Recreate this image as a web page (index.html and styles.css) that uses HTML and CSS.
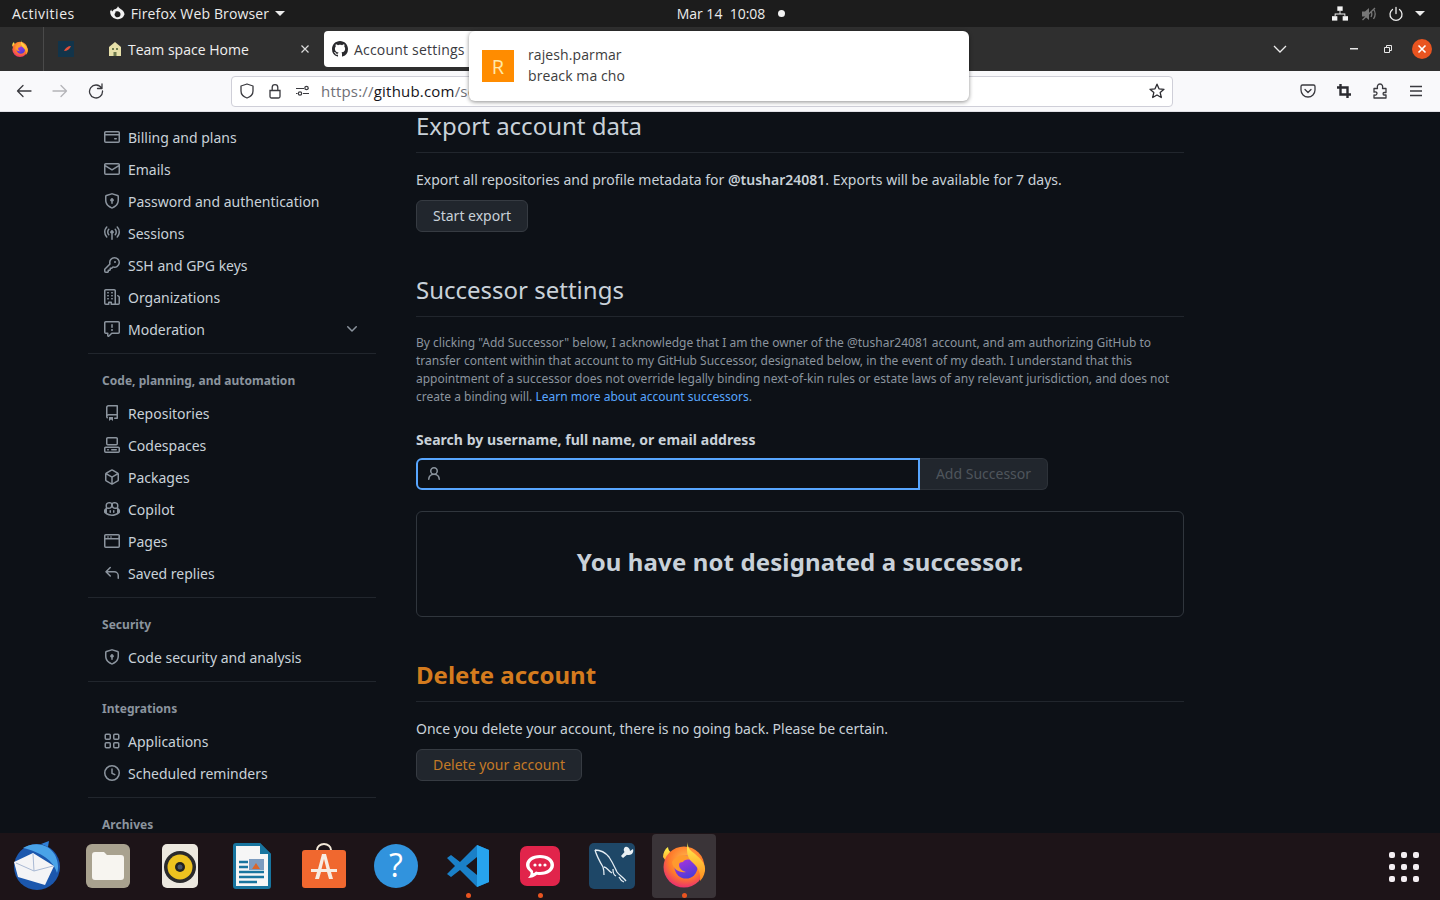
FILE: index.html
```html
<!DOCTYPE html>
<html lang="en">
<head>
  <meta charset="UTF-8">
  <title>Account settings</title>
  <link rel="stylesheet" href="styles.css">
</head>
<body>
  <svg class="sprite" xmlns="http://www.w3.org/2000/svg">
    <defs>
      <radialGradient id="foxBody" cx="0.55" cy="0.35" r="0.75">
        <stop offset="0" stop-color="#ffbd4f"/>
        <stop offset="0.55" stop-color="#ff7a2a"/>
        <stop offset="1" stop-color="#e31587"/>
      </radialGradient>
      <linearGradient id="foxFlame" x1="0.5" y1="0" x2="0.5" y2="1">
        <stop offset="0" stop-color="#fff44f"/>
        <stop offset="1" stop-color="#ff8a1f"/>
      </linearGradient>
      <linearGradient id="foxCore" x1="0.2" y1="0" x2="0.6" y2="1">
        <stop offset="0" stop-color="#b833e1"/>
        <stop offset="1" stop-color="#4b3bd6"/>
      </linearGradient>
    </defs>
    <symbol id="i-card" viewBox="0 0 16 16"><path d="M10.75 9a.75.75 0 0 0 0 1.5h1.5a.75.75 0 0 0 0-1.5h-1.5Z"/><path d="M0 3.75C0 2.784.784 2 1.75 2h12.5c.966 0 1.75.784 1.75 1.75v8.5A1.75 1.75 0 0 1 14.25 14H1.75A1.75 1.75 0 0 1 0 12.25ZM14.5 6.5h-13v5.75c0 .138.112.25.25.25h12.5a.25.25 0 0 0 .25-.25Zm0-2.75a.25.25 0 0 0-.25-.25H1.75a.25.25 0 0 0-.25.25V5h13Z"/></symbol>
    <symbol id="i-mail" viewBox="0 0 16 16"><path d="M1.75 2h12.5c.966 0 1.75.784 1.75 1.75v8.5A1.75 1.75 0 0 1 14.25 14H1.75A1.75 1.75 0 0 1 0 12.25v-8.5C0 2.784.784 2 1.75 2ZM1.5 12.251c0 .138.112.25.25.25h12.5a.25.25 0 0 0 .25-.25V5.809L8.38 9.397a.75.75 0 0 1-.76 0L1.5 5.809v6.442Zm13-8.181v-.32a.25.25 0 0 0-.25-.25H1.75a.25.25 0 0 0-.25.25v.32L8 7.88Z"/></symbol>
    <symbol id="i-shield" viewBox="0 0 16 16"><path d="M7.467.133a1.748 1.748 0 0 1 1.066 0l5.25 1.68A1.75 1.75 0 0 1 15 3.48V7c0 1.566-.32 3.182-1.303 4.682-.983 1.498-2.585 2.813-5.032 3.855a1.697 1.697 0 0 1-1.33 0c-2.447-1.042-4.049-2.357-5.032-3.855C1.32 10.182 1 8.566 1 7V3.48a1.75 1.75 0 0 1 1.217-1.667Zm.61 1.429a.25.25 0 0 0-.153 0l-5.25 1.68a.25.25 0 0 0-.174.238V7c0 1.358.275 2.666 1.057 3.86.784 1.194 2.121 2.34 4.366 3.297a.196.196 0 0 0 .154 0c2.245-.956 3.582-2.104 4.366-3.298C13.225 9.666 13.5 8.36 13.5 7V3.48a.251.251 0 0 0-.174-.237l-5.25-1.68ZM8.75 8.582v1.668a.75.75 0 0 1-1.5 0V8.582a1.75 1.75 0 1 1 1.5 0Z"/></symbol>
    <symbol id="i-broadcast" viewBox="0 0 16 16"><path d="M8.75 8.582v5.668a.75.75 0 0 1-1.5 0V8.582a1.75 1.75 0 1 1 1.5 0Zm3.983-7.125a.75.75 0 0 1 1.06.026A7.976 7.976 0 0 1 16 7c0 2.139-.84 4.083-2.207 5.517a.75.75 0 1 1-1.086-1.034A6.474 6.474 0 0 0 14.5 7a6.474 6.474 0 0 0-1.793-4.483.75.75 0 0 1 .026-1.06Zm-9.466 0a.75.75 0 0 1 .026 1.06A6.474 6.474 0 0 0 1.5 7a6.47 6.47 0 0 0 1.793 4.483.75.75 0 0 1-1.086 1.034A7.973 7.973 0 0 1 0 7c0-2.139.84-4.083 2.207-5.517a.75.75 0 0 1 1.06-.026Zm8.556 2.321A4.988 4.988 0 0 1 13 7a4.988 4.988 0 0 1-1.177 3.222.75.75 0 1 1-1.146-.967A3.487 3.487 0 0 0 11.5 7c0-.86-.309-1.645-.823-2.255a.75.75 0 0 1 1.146-.967Zm-6.492.958A3.487 3.487 0 0 0 4.5 7a3.49 3.49 0 0 0 .823 2.255.75.75 0 0 1-1.146.967A4.981 4.981 0 0 1 3 7c0-1.23.443-2.359 1.177-3.222a.75.75 0 1 1 1.146.967Z"/></symbol>
    <symbol id="i-key" viewBox="0 0 16 16"><path d="M10.5 0a5.499 5.499 0 1 1-1.288 10.848l-.932.932a.749.749 0 0 1-.53.22H7v.75a.749.749 0 0 1-.22.53l-.5.5a.749.749 0 0 1-.53.22H5v.75a.749.749 0 0 1-.22.53l-.5.5a.749.749 0 0 1-.53.22h-2A1.75 1.75 0 0 1 0 14.25v-2c0-.199.079-.389.22-.53l4.932-4.932A5.5 5.5 0 0 1 10.5 0Zm-4 5.5c-.001.431.069.86.205 1.269a.75.75 0 0 1-.181.768L1.5 12.56v1.69c0 .138.112.25.25.25h1.69l.06-.06v-1.19a.75.75 0 0 1 .75-.75h1.19l.06-.06v-1.19a.75.75 0 0 1 .75-.75h1.19l1.023-1.025a.75.75 0 0 1 .768-.18A4 4 0 1 0 6.5 5.5ZM11 6a1 1 0 1 1 0-2 1 1 0 0 1 0 2Z"/></symbol>
    <symbol id="i-org" viewBox="0 0 16 16"><path d="M1.75 16A1.75 1.75 0 0 1 0 14.25V1.75C0 .784.784 0 1.75 0h8.5C11.216 0 12 .784 12 1.75v12.5c0 .085-.006.168-.018.25h2.268a.25.25 0 0 0 .25-.25V8.285a.25.25 0 0 0-.111-.208l-1.055-.703a.749.749 0 1 1 .832-1.248l1.055.703c.487.325.779.871.779 1.456v5.965A1.75 1.75 0 0 1 14.25 16h-3.5a.766.766 0 0 1-.197-.026c-.099.017-.2.026-.303.026h-3a.75.75 0 0 1-.75-.75V14h-1v1.25a.75.75 0 0 1-.75.75Zm-.25-1.75c0 .138.112.25.25.25H4v-1.25a.75.75 0 0 1 .75-.75h2.5a.75.75 0 0 1 .75.75v1.25h2.25a.25.25 0 0 0 .25-.25V1.75a.25.25 0 0 0-.25-.25h-8.5a.25.25 0 0 0-.25.25ZM3.75 6h.5a.75.75 0 0 1 0 1.5h-.5a.75.75 0 0 1 0-1.5ZM3 3.75A.75.75 0 0 1 3.75 3h.5a.75.75 0 0 1 0 1.5h-.5A.75.75 0 0 1 3 3.75Zm4 3A.75.75 0 0 1 7.75 6h.5a.75.75 0 0 1 0 1.5h-.5A.75.75 0 0 1 7 6.75ZM7.75 3h.5a.75.75 0 0 1 0 1.5h-.5a.75.75 0 0 1 0-1.5ZM3 9.750A.75.75 0 0 1 3.75 9h.5a.75.75 0 0 1 0 1.5h-.5A.75.75 0 0 1 3 9.750ZM7.75 9h.5a.75.75 0 0 1 0 1.5h-.5a.75.75 0 0 1 0-1.5Z"/></symbol>
    <symbol id="i-report" viewBox="0 0 16 16"><path d="M0 1.75C0 .784.784 0 1.75 0h12.5C15.216 0 16 .784 16 1.75v9.5A1.75 1.75 0 0 1 14.25 13H8.06l-2.573 2.573A1.458 1.458 0 0 1 3 14.543V13H1.75A1.75 1.75 0 0 1 0 11.25Zm1.75-.25a.25.25 0 0 0-.25.25v9.5c0 .138.112.25.25.25h2a.75.75 0 0 1 .75.75v2.19l2.72-2.72a.749.749 0 0 1 .53-.22h6.5a.25.25 0 0 0 .25-.25v-9.5a.25.25 0 0 0-.25-.25Zm7 2.25v2.5a.75.75 0 0 1-1.5 0v-2.5a.75.75 0 0 1 1.5 0ZM9 9a1 1 0 1 1-2 0 1 1 0 0 1 2 0Z"/></symbol>
    <symbol id="i-repo" viewBox="0 0 16 16"><path d="M2 2.5A2.5 2.5 0 0 1 4.5 0h8.75a.75.75 0 0 1 .75.75v12.5a.75.75 0 0 1-.75.75h-2.5a.75.75 0 0 1 0-1.5h1.75v-2h-8a1 1 0 0 0-.714 1.7.75.75 0 1 1-1.072 1.05A2.495 2.495 0 0 1 2 11.5Zm10.5-1h-8a1 1 0 0 0-1 1v6.708A2.486 2.486 0 0 1 4.5 9h8ZM5 12.25a.25.25 0 0 1 .25-.25h3.5a.25.25 0 0 1 .25.25v3.25a.25.25 0 0 1-.4.2l-1.45-1.087a.249.249 0 0 0-.3 0L5.4 15.7a.25.25 0 0 1-.4-.2Z"/></symbol>
    <symbol id="i-codespaces" viewBox="0 0 16 16"><path d="M0 11.25c0-.966.784-1.75 1.75-1.75h12.5c.966 0 1.75.784 1.75 1.75v3A1.75 1.75 0 0 1 14.25 16H1.75A1.75 1.75 0 0 1 0 14.25Zm2-9.5C2 .784 2.784 0 3.75 0h8.5C13.216 0 14 .784 14 1.75v5a1.75 1.75 0 0 1-1.75 1.75h-8.5A1.75 1.75 0 0 1 2 6.75Zm1.75-.25a.25.25 0 0 0-.25.25v5c0 .138.112.25.25.25h8.5a.25.25 0 0 0 .25-.25v-5a.25.25 0 0 0-.25-.25Zm-2 9.5a.25.25 0 0 0-.25.25v3c0 .138.112.25.25.25h12.5a.25.25 0 0 0 .25-.25v-3a.25.25 0 0 0-.25-.25Z"/><path d="M7 12.75a.75.75 0 0 1 .75-.75h4.5a.75.75 0 0 1 0 1.5h-4.5a.75.75 0 0 1-.75-.75Zm-4 0a.75.75 0 0 1 .75-.75h.5a.75.75 0 0 1 0 1.5h-.5a.75.75 0 0 1-.75-.75Z"/></symbol>
    <symbol id="i-package" viewBox="0 0 16 16"><path d="m8.878.392 5.25 3.045c.54.314.872.89.872 1.514v6.098a1.75 1.75 0 0 1-.872 1.514l-5.25 3.045a1.75 1.75 0 0 1-1.756 0l-5.25-3.045A1.75 1.75 0 0 1 1 11.049V4.951c0-.624.332-1.201.872-1.514L7.122.392a1.75 1.75 0 0 1 1.756 0ZM7.875 1.69l-4.63 2.685L8 7.133l4.755-2.758-4.63-2.685a.248.248 0 0 0-.25 0ZM2.5 5.677v5.372c0 .09.047.171.125.216l4.625 2.683V8.432Zm6.25 8.271 4.625-2.683a.25.25 0 0 0 .125-.216V5.677L8.75 8.432Z"/></symbol>
    <symbol id="i-copilot" viewBox="0 0 16 16"><path d="M7.998 15.035c-4.562 0-7.873-2.914-7.998-3.749V9.338c.085-.628.677-1.686 1.588-2.065.013-.07.024-.143.036-.218.029-.183.06-.384.126-.612-.201-.508-.254-1.084-.254-1.656 0-.87.128-1.769.693-2.484.579-.733 1.494-1.124 2.724-1.261 1.206-.134 2.262.034 2.944.765.05.053.096.108.139.165.044-.057.094-.112.143-.165.682-.731 1.738-.899 2.944-.765 1.23.137 2.145.528 2.724 1.261.566.715.693 1.614.693 2.484 0 .572-.053 1.148-.254 1.656.066.228.098.429.126.612.012.076.024.148.037.218.924.385 1.522 1.471 1.591 2.095v1.872c0 .766-3.351 3.795-8.002 3.795Zm0-1.485c2.28 0 4.584-1.11 5.002-1.433V7.862l-.023-.116c-.49.21-1.075.291-1.727.291-1.146 0-2.059-.327-2.71-.991A3.222 3.222 0 0 1 8 6.303a3.24 3.24 0 0 1-.544.743c-.65.664-1.563.991-2.71.991-.652 0-1.236-.081-1.727-.291l-.023.116v4.255c.419.323 2.722 1.433 5.002 1.433ZM6.762 2.83c-.193-.206-.637-.413-1.682-.297-1.019.113-1.479.404-1.713.7-.247.312-.369.789-.369 1.554 0 .793.129 1.171.308 1.371.162.181.519.379 1.442.379.853 0 1.339-.235 1.638-.54.315-.322.527-.827.617-1.553.117-.935-.037-1.395-.241-1.614Zm4.155-.297c-1.044-.116-1.488.091-1.681.297-.204.219-.359.679-.242 1.614.091.726.303 1.231.618 1.553.299.305.784.54 1.638.54.922 0 1.28-.198 1.442-.379.179-.2.308-.578.308-1.371 0-.765-.123-1.242-.37-1.554-.233-.296-.693-.587-1.713-.7Z"/><path d="M6.25 9.037a.75.75 0 0 1 .75.75v1.501a.75.75 0 0 1-1.5 0V9.787a.75.75 0 0 1 .75-.75Zm4.25.75v1.501a.75.75 0 0 1-1.5 0V9.787a.75.75 0 0 1 1.5 0Z"/></symbol>
    <symbol id="i-browser" viewBox="0 0 16 16"><path d="M0 2.75C0 1.784.784 1 1.75 1h12.5c.966 0 1.75.784 1.75 1.75v10.5A1.75 1.75 0 0 1 14.25 15H1.75A1.75 1.75 0 0 1 0 13.25ZM14.5 6.5h-13v6.75c0 .138.112.25.25.25h12.5a.25.25 0 0 0 .25-.25Zm0-3.75a.25.25 0 0 0-.25-.25H1.75a.25.25 0 0 0-.25.25V5h2V3h1v2h2V3h1v2h6.75Z"/></symbol>
    <symbol id="i-reply" viewBox="0 0 16 16"><path d="M6.78 1.97a.75.75 0 0 1 0 1.06L3.81 6h6.44A4.75 4.75 0 0 1 15 10.75v2.5a.75.75 0 0 1-1.5 0v-2.5a3.25 3.25 0 0 0-3.25-3.25H3.81l2.97 2.97a.749.749 0 0 1-.326 1.275.749.749 0 0 1-.734-.215L1.47 7.28a.75.75 0 0 1 0-1.06l4.25-4.25a.75.75 0 0 1 1.06 0Z"/></symbol>
    <symbol id="i-apps" viewBox="0 0 16 16"><g fill="none" stroke="currentColor" stroke-width="1.5"><rect x="1.25" y="1.25" width="5" height="5" rx="1"/><rect x="9.75" y="1.25" width="5" height="5" rx="1"/><rect x="1.25" y="9.75" width="5" height="5" rx="1"/><rect x="9.75" y="9.75" width="5" height="5" rx="1"/></g></symbol>
    <symbol id="i-clock" viewBox="0 0 16 16"><g fill="none" stroke="currentColor" stroke-width="1.5" stroke-linecap="round" stroke-linejoin="round"><circle cx="8" cy="8" r="7.25"/><path d="M8 4v4.3l2.8 1.4"/></g></symbol>
    <symbol id="i-person" viewBox="0 0 16 16"><path d="M10.561 8.073a6.005 6.005 0 0 1 3.432 5.142.75.75 0 1 1-1.498.07 4.5 4.5 0 0 0-8.99 0 .75.75 0 0 1-1.498-.07 6.004 6.004 0 0 1 3.431-5.142 3.999 3.999 0 1 1 5.123 0ZM10.5 5a2.5 2.5 0 1 0-5 0 2.5 2.5 0 0 0 5 0Z"/></symbol>
    <symbol id="i-chevron" viewBox="0 0 16 16"><path d="M12.78 5.22a.749.749 0 0 1 0 1.06l-4.25 4.25a.749.749 0 0 1-1.06 0L3.22 6.28a.749.749 0 1 1 1.06-1.06L8 8.939l3.72-3.719a.749.749 0 0 1 1.06 0Z"/></symbol>
    <symbol id="i-github" viewBox="0 0 16 16"><path d="M8 0c4.42 0 8 3.58 8 8a8.013 8.013 0 0 1-5.45 7.59c-.4.08-.55-.17-.55-.38 0-.27.01-1.13.01-2.2 0-.75-.25-1.23-.54-1.48 1.78-.2 3.65-.88 3.65-3.95 0-.88-.31-1.59-.82-2.15.08-.2.36-1.02-.08-2.12 0 0-.67-.22-2.2.82-.64-.18-1.32-.27-2-.27-.68 0-1.36.09-2 .27-1.53-1.03-2.2-.82-2.2-.82-.44 1.1-.16 1.92-.08 2.12-.51.56-.82 1.28-.82 2.15 0 3.06 1.86 3.75 3.64 3.95-.23.2-.44.55-.5 1.07-.46.21-1.61.55-2.33-.66-.15-.24-.6-.83-1.23-.82-.67.01-.27.38.01.53.34.19.73.9.82 1.13.16.45.68 1.31 2.69.94 0 .67.01 1.3.01 1.49 0 .21-.15.45-.55.38A7.995 7.995 0 0 1 0 8c0-4.42 3.58-8 8-8Z"/></symbol>
    <symbol id="i-firefox" viewBox="0 0 48 48">
      <path fill="url(#foxFlame)" d="M3 15c0-4 2-8 5-10 0 3 2 5 4 6l8 4-10 10z"/>
      <circle cx="24" cy="25" r="20.500" fill="url(#foxBody)"/>
      <circle cx="26" cy="25" r="11.500" fill="url(#foxCore)"/>
      <path fill="#ff9a2e" d="M12 20c3-5 10-9 16-6 3 1 5 3 5 5-5-3-9-1-10 1-3 0-4 1-4 3 0 3 3 6 7 7-6 1-13-2-14-10z"/>
      <path fill="url(#foxFlame)" d="M28 0c-1 6 3 9 7 12 6 5 11 10 10 17-1 5-3 8-5 10 1-8-2-14-8-19-5-4-6-12-4-20z"/>
    </symbol>
  </svg>

  <header class="topbar">
    <div class="topbar-left">
      <span class="activities">Activities</span>
      <span class="app-menu">
        <svg width="16" height="16" viewBox="0 0 16 16"><path fill="#f2f2f2" d="M9 0c.3 1.5 1.5 2.4 3 3.3 2 1.3 3.5 3 3.5 5.200A7.500 7.500 0 0 1 1.100 5.600c.3-.9.7-1.600 1.200-2.200 0 1 .4 1.700 1 2.100.6-1.400 2-2.400 3.300-2.600C7.700 2.500 8.800 1.400 9 0Zm-1 5.200a3.200 3.200 0 0 0-2.400 1.200c.6-.2 1.100 0 1.300.4-.9.4-1.400 1-1.300 1.900.1 1.500 1.400 2.600 2.900 2.600a3 3 0 0 0 3-3A3.100 3.100 0 0 0 8 5.200Z"/></svg>
        <span class="app-name">Firefox Web Browser</span>
        <i class="caret"></i>
      </span>
    </div>
    <div class="clock">
      <span>Mar 14&nbsp; 10:08</span>
      <i class="clock-dot"></i>
    </div>
    <div class="tray">
      <svg class="tray-net" width="16" height="15" viewBox="0 0 18 16"><g fill="#f2f2f2"><rect x="6" y="0" width="6" height="5"/><rect x="0" y="11" width="6" height="5"/><rect x="12" y="11" width="6" height="5"/><path d="M8.500 5h1v3H15v3h-1V9H4v2H3V8h5.500z"/></g></svg>
      <svg width="16" height="16" viewBox="0 0 16 16"><path fill="#777" d="M1 5.500h3L8 2v12l-4-3.500H1z"/><path fill="none" stroke="#777" stroke-width="1.300" d="M10 5c1 1.800 1 4.200 0 6M12.500 3c2 3 2 7 0 10M1.500 14 14 2"/></svg>
      <svg width="16" height="16" viewBox="0 0 16 16"><path fill="none" stroke="#ececec" stroke-width="1.300" stroke-linecap="round" d="M8 1.500v6M4.500 3.500a6 6 0 1 0 7 0"/></svg>
      <i class="caret"></i>
    </div>
  </header>

  <div class="tabbar">
    <div class="pinned">
      <svg width="18" height="18"><use href="#i-firefox"/></svg>
    </div>
    <div class="pinned-tab">
      <svg width="16" height="16" viewBox="0 0 16 16"><rect width="16" height="16" fill="#12344a"/><path fill="#e2503a" d="M6 10c1-3 4-5 7-5-1 3-4 5-7 5z"/></svg>
    </div>
    <div class="tab">
      <svg width="14" height="14" viewBox="0 0 14 14"><path fill="#e6dfa8" d="M7 0 1 5v9h12V5z"/><path fill="#6e7a4e" d="M4 6h2v2H4zM8 6h2v2H8zM5.500 10h3v4h-3z"/></svg>
      <span class="tab-label">Team space Home</span>
      <svg width="10" height="10" viewBox="0 0 10 10"><path stroke="#dcdcdc" stroke-width="1.200" d="M1.500 1.500l7 7M8.500 1.500l-7 7"/></svg>
    </div>
    <div class="tab tab-active">
      <svg width="16" height="16"><use href="#i-github"/></svg>
      <span class="tab-label">Account settings</span>
    </div>
    <div class="window-controls">
      <svg class="ctl-list" width="14" height="8" viewBox="0 0 14 8"><path fill="none" stroke="#ececec" stroke-width="1.300" d="M1 1l6 6 6-6"/></svg>
      <svg class="ctl-min" width="8" height="2"><rect width="8" height="1.500" fill="#e8e8e8"/></svg>
      <svg class="ctl-max" width="8" height="8" viewBox="0 0 8 8"><path fill="none" stroke="#e8e8e8" d="M.5 2.500h5v5h-5zM2.500 2.500v-2h5v5h-2"/></svg>
      <span class="ctl-close"><svg width="10" height="10" viewBox="0 0 10 10"><path stroke="#fff" stroke-width="1.600" d="M1.500 1.500l7 7M8.500 1.500l-7 7"/></svg></span>
    </div>
  </div>

  <div class="toolbar">
    <div class="nav-buttons">
      <svg width="16" height="16" viewBox="0 0 16 16"><path fill="none" stroke="#3a3a3f" stroke-width="1.300" stroke-linecap="round" stroke-linejoin="round" d="M15 8H1.500M7 2.500 1.500 8 7 13.500"/></svg>
      <svg width="16" height="16" viewBox="0 0 16 16"><path fill="none" stroke="#b4b4b8" stroke-width="1.300" stroke-linecap="round" stroke-linejoin="round" d="M1 8h13.500M9 2.500 14.500 8 9 13.500"/></svg>
      <svg width="16" height="16" viewBox="0 0 16 16"><path fill="none" stroke="#3a3a3f" stroke-width="1.300" stroke-linecap="round" stroke-linejoin="round" d="M13.500 5A6.500 6.500 0 1 0 14.500 8M14 1v4.500H9.500"/></svg>
    </div>
    <div class="urlbar">
      <svg width="16" height="16" viewBox="0 0 16 16"><path fill="none" stroke="#3a3a3f" stroke-width="1.300" stroke-linejoin="round" d="M8 1 2 3v5c0 3.500 3 6 6 7 3-1 6-3.500 6-7V3z"/></svg>
      <svg width="16" height="16" viewBox="0 0 16 16"><path fill="none" stroke="#3a3a3f" stroke-width="1.300" d="M3 7.500h10v6a1.500 1.500 0 0 1-1.500 1.500h-7A1.500 1.500 0 0 1 3 13.500zM5.200 7.500V4.500a2.800 2.800 0 0 1 5.600 0v3"/></svg>
      <svg width="16" height="16" viewBox="0 0 16 16"><g fill="none" stroke="#3a3a3f" stroke-width="1.200"><path d="M1 5.500h8M14 10.500H8M14 5.500h-.5M1 10.500h1.500"/><circle cx="11.500" cy="5" r="1.700"/><circle cx="5" cy="10.500" r="1.700"/></g></svg>
      <span class="url"><span class="url-dim">https://</span>github.com<span class="url-dim">/settings/admin</span></span>
      <svg width="16" height="16" viewBox="0 0 16 16"><path fill="none" stroke="#2b2b30" stroke-width="1.300" stroke-linejoin="round" d="M8 1.200 10 5.800l5 .5-3.800 3.300 1.100 4.900L8 12l-4.300 2.500 1.100-4.900L1 6.300l5-.5z"/></svg>
    </div>
    <div class="toolbar-right">
      <svg width="16" height="16" viewBox="0 0 16 16"><path fill="none" stroke="#3a3a3f" stroke-width="1.300" stroke-linejoin="round" d="M2.500 2h11A1.500 1.500 0 0 1 15 3.500V7a7 7 0 0 1-14 0V3.500A1.500 1.500 0 0 1 2.500 2z"/><path fill="none" stroke="#3a3a3f" stroke-width="1.300" stroke-linecap="round" stroke-linejoin="round" d="M5 6.500 8 9.500l3-3"/></svg>
      <svg width="16" height="16" viewBox="0 0 16 16"><path fill="none" stroke="#2b2b30" stroke-width="2.400" d="M4.500 1v10.500H15M1 4.500h10.500V15"/></svg>
      <svg width="16" height="16" viewBox="0 0 16 16"><path fill="none" stroke="#3a3a3f" stroke-width="1.300" stroke-linejoin="round" d="M2 5.500h3.500C5 3.500 5.500 1 8 1s3 2.500 2.500 4.500H14v4h-2c-1.200 0-1.200 2.500 0 2.500h2v3H2v-3c2 .5 3-.7 3-1.700S4 8.500 2 9z"/></svg>
      <svg width="16" height="16" viewBox="0 0 16 16"><path stroke="#3a3a3f" stroke-width="1.300" d="M2 3.500h12M2 8h12M2 12.500h12"/></svg>
    </div>
  </div>

  <main class="page">
    <nav class="side">
      <ul class="side-list">
        <li class="side-item"><svg class="octicon"><use href="#i-card"/></svg>Billing and plans</li>
        <li class="side-item"><svg class="octicon"><use href="#i-mail"/></svg>Emails</li>
        <li class="side-item"><svg class="octicon"><use href="#i-shield"/></svg>Password and authentication</li>
        <li class="side-item"><svg class="octicon"><use href="#i-broadcast"/></svg>Sessions</li>
        <li class="side-item"><svg class="octicon"><use href="#i-key"/></svg>SSH and GPG keys</li>
        <li class="side-item"><svg class="octicon"><use href="#i-org"/></svg>Organizations</li>
        <li class="side-item"><svg class="octicon"><use href="#i-report"/></svg>Moderation<svg class="octicon side-chevron"><use href="#i-chevron"/></svg></li>
      </ul>
      <div class="side-group">
        <h3 class="side-title">Code, planning, and automation</h3>
        <ul class="side-list">
          <li class="side-item"><svg class="octicon"><use href="#i-repo"/></svg>Repositories</li>
          <li class="side-item"><svg class="octicon"><use href="#i-codespaces"/></svg>Codespaces</li>
          <li class="side-item"><svg class="octicon"><use href="#i-package"/></svg>Packages</li>
          <li class="side-item"><svg class="octicon"><use href="#i-copilot"/></svg>Copilot</li>
          <li class="side-item"><svg class="octicon"><use href="#i-browser"/></svg>Pages</li>
          <li class="side-item"><svg class="octicon"><use href="#i-reply"/></svg>Saved replies</li>
        </ul>
      </div>
      <div class="side-group">
        <h3 class="side-title">Security</h3>
        <ul class="side-list">
          <li class="side-item"><svg class="octicon"><use href="#i-shield"/></svg>Code security and analysis</li>
        </ul>
      </div>
      <div class="side-group">
        <h3 class="side-title">Integrations</h3>
        <ul class="side-list">
          <li class="side-item"><svg class="octicon"><use href="#i-apps"/></svg>Applications</li>
          <li class="side-item"><svg class="octicon"><use href="#i-clock"/></svg>Scheduled reminders</li>
        </ul>
      </div>
      <div class="side-group">
        <h3 class="side-title">Archives</h3>
      </div>
    </nav>

    <section class="content">
      <h2 class="sub-head">Export account data</h2>
      <p class="para">Export all repositories and profile metadata for <strong>@tushar24081</strong>. Exports will be available for 7 days.</p>
      <button class="btn">Start export</button>

      <h2 class="sub-head sub-head-next">Successor settings</h2>
      <p class="note">By clicking "Add Successor" below, I acknowledge that I am the owner of the @tushar24081 account, and am authorizing GitHub to transfer content within that account to my GitHub Successor, designated below, in the event of my death. I understand that this appointment of a successor does not override legally binding next-of-kin rules or estate laws of any relevant jurisdiction, and does not create a binding will. <a class="link" href="#">Learn more about account successors</a>.</p>
      <label class="field-label">Search by username, full name, or email address</label>
      <div class="search-row">
        <div class="search-input"><svg class="octicon"><use href="#i-person"/></svg></div>
        <button class="add-btn">Add Successor</button>
      </div>
      <div class="blank-box">You have not designated a successor.</div>

      <h2 class="sub-head sub-head-next danger">Delete account</h2>
      <p class="para">Once you delete your account, there is no going back. Please be certain.</p>
      <button class="btn btn-danger">Delete your account</button>
    </section>
  </main>

  <footer class="dock">
    <div class="dock-item">
      <svg width="50" height="50" viewBox="0 0 50 50"><circle cx="26" cy="26" r="23" fill="#1b57ad"/><path fill="#4aa3e8" d="M12 7c9-6 25-6 32 7 3 6 4 13 2 18C43 20 30 11 12 7z"/><path fill="#2f7fd6" d="M30 3 38 0l-1 6z"/><path fill="#f4f4f6" d="M3 21 22 12l21 13-9 19L7 36z"/><path fill="none" stroke="#a9b9d4" stroke-width="1" d="M5 22l18 8 19-5M22 13l1 17"/></svg>
    </div>
    <div class="dock-item">
      <svg width="44" height="44" viewBox="0 0 44 44"><rect width="44" height="44" rx="6" fill="#a9a28f"/><path fill="#f7f5f0" d="M6 11a3 3 0 0 1 3-3h9l3 3h14a3 3 0 0 1 3 3v19a3 3 0 0 1-3 3H9a3 3 0 0 1-3-3z"/></svg>
    </div>
    <div class="dock-item">
      <svg width="36" height="44" viewBox="0 0 36 44"><rect width="36" height="44" rx="5" fill="#ece8df"/><circle cx="18" cy="23" r="16" fill="#2a2a2c"/><circle cx="18" cy="23" r="12.500" fill="#eec31f"/><circle cx="18" cy="23" r="5" fill="#222"/><circle cx="18" cy="23" r="2.500" fill="#47546a"/></svg>
    </div>
    <div class="dock-item">
      <svg width="38" height="46" viewBox="0 0 38 46"><path fill="#18759f" d="M3 0h24l11 11v32a3 3 0 0 1-3 3H3a3 3 0 0 1-3-3V3a3 3 0 0 1 3-3z"/><path fill="#f6f6f6" d="M3 3h24v8h8v32H3z"/><path fill="#18759f" d="M27 0l11 11H27z"/><path stroke="#18759f" stroke-width="2.400" d="M6 19h9M6 24h9M6 29h25M6 34h25M6 39h18"/><rect x="16" y="16" width="15" height="11" fill="#7c9cc0"/><path fill="#d9662a" d="M19 26l4-6 4 6z"/></svg>
    </div>
    <div class="dock-item">
      <svg width="46" height="46" viewBox="0 0 46 46"><path fill="none" stroke="#f3e8d8" stroke-width="2" d="M16 8V7a7 6 0 0 1 14 0v1"/><rect x="1" y="7" width="44" height="38" rx="3" fill="#f0682f"/><path fill="#f7ece2" d="M21 11h4l4 15h7v3h-6l2 7h-4l-2-7h-6l-2 7h-4l2-7h-6v-3h7zm2 5-2.500 10h5z"/></svg>
    </div>
    <div class="dock-item">
      <svg width="44" height="44" viewBox="0 0 44 44"><circle cx="22" cy="22" r="22" fill="#3193dd"/><text x="22" y="33" text-anchor="middle" class="help-mark">?</text></svg>
    </div>
    <div class="dock-item">
      <svg width="44" height="44" viewBox="0 0 44 44"><path fill="#1a80c8" d="M31 1 14 18 5 11 1 14l8 8-8 8 4 3 9-7 17 17 12-5V6z"/><path fill="#27a4ee" d="M31 1l12 5v32l-12 5z"/><path fill="#1d1418" d="M31 13v18l-11-9z"/></svg>
      <i class="run-dot"></i>
    </div>
    <div class="dock-item">
      <svg width="40" height="40" viewBox="0 0 40 40"><rect width="40" height="40" rx="7" fill="#e1244b"/><path fill="#fff" d="M20 9c8 0 14 4 14 10s-6 10-14 10c-1 0-2 0-3-.3-2 2-6 3.300-9 3.300 1.500-1.500 3-3.500 2.500-5.800C8 24 6 22 6 19c0-6 6-10 14-10z"/><path fill="#e1244b" d="M20 12c6 0 10.500 3 10.500 7s-4.500 7-10.500 7c-1.500 0-3-.2-4-.6-1 1-2 1.600-3 1.800.3-1 .3-2.200-.5-3C10.500 22.800 9.500 21 9.500 19c0-4 4.500-7 10.500-7z"/><circle cx="15" cy="19" r="1.600" fill="#fff"/><circle cx="20" cy="19" r="1.600" fill="#fff"/><circle cx="25" cy="19" r="1.600" fill="#fff"/></svg>
      <i class="run-dot"></i>
    </div>
    <div class="dock-item">
      <svg width="46" height="46" viewBox="0 0 46 46"><rect width="46" height="46" rx="5" fill="#1e4767"/><path fill="none" stroke="#e6eef4" stroke-width="1.300" d="M6 7c6 0 10 2 14 7 4 6 6 11 8 15 2 3 6 5 9 9M6 7c2 7 5 12 8 17 1 3 1 6 1 8M15 24c3 0 4 4 8 6M24 26c0 5 1 6 3 7M30 34c1 2 2 4 5 5"/><path fill="#eaf0f4" d="M36 4a4 4 0 0 1 5 4l3-2c1 3-1 6-4 6-1 0-1.500 0-2-.3L34 15l-2-2 3.500-4a4 4 0 0 1 .5-5z"/></svg>
    </div>
    <div class="dock-item dock-active">
      <svg width="48" height="48"><use href="#i-firefox"/></svg>
      <i class="run-dot"></i>
    </div>
    <div class="app-grid">
      <i></i><i></i><i></i><i></i><i></i><i></i><i></i><i></i><i></i>
    </div>
  </footer>

  <div class="notice">
    <span class="notice-avatar">R</span>
    <div class="notice-text">
      <div>rajesh.parmar</div>
      <div>breack ma cho</div>
    </div>
  </div>
</body>
</html>
```

FILE: styles.css
```css
* {
  box-sizing: border-box;
}

html,
body {
  height: 100%;
}

body {
  margin: 0;
  display: flex;
  flex-direction: column;
  height: 100vh;
  overflow: hidden;
  background: #0d1117;
  font-family: "Noto Sans", sans-serif;
  font-size: 14px;
  color: #c9d1d9;
}

.sprite {
  flex: none;
  width: 0;
  height: 0;
  overflow: hidden;
}

/* gnome top bar */
.topbar {
  flex: none;
  height: 27px;
  display: grid;
  grid-template-columns: 1fr auto 1fr;
  align-items: center;
  background: #1c1c1c;
  color: #ececec;
  font-family: "Open Sans", sans-serif;
  font-size: 14px;
}

.topbar-left {
  display: flex;
  align-items: center;
  padding-left: 12px;
}

.activities {
  margin-right: 34px;
  letter-spacing: 0.5px;
}

.app-menu {
  display: flex;
  align-items: center;
  gap: 6px;
}

.app-name {
  letter-spacing: 0.15px;
}

.caret {
  display: inline-block;
  width: 0;
  height: 0;
  border-left: 5px solid transparent;
  border-right: 5px solid transparent;
  border-top: 5px solid #ececec;
}

.clock {
  display: flex;
  align-items: center;
  gap: 13px;
  padding-left: 22px;
}

.clock-dot {
  width: 7px;
  height: 7px;
  border-radius: 50%;
  background: #f2f2f2;
}

.tray {
  display: flex;
  align-items: center;
  justify-content: flex-end;
  gap: 11px;
  padding-right: 15px;
}

.tray-net {
  margin-right: 2px;
}

/* firefox tab strip */
.tabbar {
  flex: none;
  height: 44px;
  display: flex;
  align-items: center;
  background: #2f2f2f;
  color: #f0f0f0;
  font-family: "Open Sans", sans-serif;
}

.pinned {
  width: 44px;
  height: 44px;
  display: flex;
  align-items: center;
  justify-content: center;
  padding-right: 4px;
  border-right: 1px solid #4a4a4a;
}

.pinned-tab {
  width: 44px;
  display: flex;
  justify-content: center;
}

.tab {
  width: 236px;
  height: 36px;
  display: flex;
  align-items: center;
  gap: 6px;
  padding-left: 20px;
  padding-right: 14px;
}

.tab-label {
  flex: 1;
  white-space: nowrap;
}

.tab-active {
  width: 170px;
  padding-left: 8px;
  background: #fff;
  color: #3a3a3f;
  border-radius: 4px;
  fill: #2a2a2e;
  letter-spacing: 0.2px;
}

.window-controls {
  margin-left: auto;
  display: flex;
  align-items: center;
  padding-right: 8px;
}

.ctl-list {
  margin-right: 63px;
}

.ctl-min {
  margin-right: 26px;
}

.ctl-max {
  margin-right: 20px;
}

.ctl-close {
  width: 20px;
  height: 20px;
  display: flex;
  align-items: center;
  justify-content: center;
  border-radius: 50%;
  background: #e95420;
}

/* firefox nav bar */
.toolbar {
  flex: none;
  height: 41px;
  display: flex;
  align-items: center;
  background: #f9f9fb;
  border-bottom: 1px solid #e0e0e6;
}

.nav-buttons {
  width: 231px;
  display: flex;
  align-items: center;
  gap: 20px;
  padding-left: 16px;
}

.urlbar {
  width: 942px;
  height: 31px;
  display: flex;
  align-items: center;
  gap: 12px;
  padding: 0 7px;
  background: #fff;
  border: 1px solid #cfcfd8;
  border-radius: 4px;
  color: #15141a;
  font-family: "Open Sans", sans-serif;
}

.url {
  flex: 1;
  margin-left: -2px;
  font-size: 15px;
  letter-spacing: 0.2px;
  white-space: nowrap;
}

.url-dim {
  color: #6f6f76;
}

.toolbar-right {
  flex: 1;
  display: flex;
  align-items: center;
  justify-content: flex-end;
  gap: 20px;
  padding-right: 16px;
}

/* github settings page */
.page {
  flex: 1;
  min-height: 0;
  overflow: hidden;
  display: flex;
  padding-left: 88px;
}

.side {
  flex: none;
  width: 288px;
  padding-top: 9px;
}

.side-list {
  list-style: none;
  margin: 0;
  padding: 0;
}

.side-item {
  height: 32px;
  display: flex;
  align-items: center;
  gap: 8px;
  padding: 0 16px;
}

.octicon {
  flex: none;
  width: 16px;
  height: 16px;
  fill: #8b949e;
  color: #8b949e;
}

.side-chevron {
  margin-left: auto;
}

.side-group {
  margin-top: 8px;
  padding-top: 18px;
  border-top: 1px solid #21262d;
}

.side-title {
  margin: 0 0 7px;
  padding-left: 14px;
  font-size: 12px;
  line-height: 18px;
  font-weight: 700;
  letter-spacing: 0.03px;
  color: #8b949e;
}

.content {
  flex: none;
  width: 768px;
  margin-left: 40px;
}

.sub-head {
  height: 41px;
  margin: 0;
  border-bottom: 1px solid #21262d;
  font-size: 24px;
  line-height: 28px;
  font-weight: 400;
}

.sub-head-next {
  margin-top: 44px;
}

.danger {
  font-weight: 700;
  color: #d47b1e;
}

.para {
  margin: 16px 0 10px;
  line-height: 21px;
}

.para strong {
  font-weight: 600;
}

.note {
  margin: 17px 0 23px;
  font-size: 12px;
  line-height: 18px;
  color: #8b949e;
}

.link {
  color: #58a6ff;
  text-decoration: none;
}

.btn {
  display: block;
  height: 32px;
  padding: 0 16px 2px;
  background: #21262d;
  border: 1px solid #363b42;
  border-radius: 6px;
  color: #c9d1d9;
  font: inherit;
}

.btn-danger {
  color: #c47a27;
}

.field-label {
  display: block;
  margin-bottom: 8px;
  line-height: 21px;
  font-weight: 700;
  letter-spacing: 0.04px;
}

.search-row {
  display: flex;
  height: 32px;
}

.search-input {
  width: 504px;
  display: flex;
  align-items: center;
  padding-left: 8px;
  background: #0d1117;
  border: 2px solid #58a6ff;
  border-radius: 6px 0 0 6px;
}

.add-btn {
  width: 128px;
  padding-bottom: 2px;
  background: #21262d;
  border: 1px solid #2d3239;
  border-left: 0;
  border-radius: 0 6px 6px 0;
  color: #4f555c;
  font: inherit;
}

.blank-box {
  height: 106px;
  margin-top: 21px;
  padding-bottom: 5px;
  display: flex;
  align-items: center;
  justify-content: center;
  border: 1px solid #30363d;
  border-radius: 6px;
  font-size: 24px;
  font-weight: 700;
  letter-spacing: 0.12px;
}

/* ubuntu dock */
.dock {
  flex: none;
  height: 67px;
  padding-top: 1px;
  display: flex;
  align-items: flex-start;
  background: #1d1418;
}

.dock-item {
  position: relative;
  flex: none;
  width: 64px;
  height: 64px;
  margin: 0 4px;
  display: flex;
  align-items: center;
  justify-content: center;
  border-radius: 4px;
}

.dock-active {
  background: #3a3438;
}

.run-dot {
  position: absolute;
  left: 29.5px;
  bottom: 0;
  width: 5px;
  height: 5px;
  border-radius: 50%;
  background: #e95420;
}

.help-mark {
  font-family: "Open Sans", sans-serif;
  font-size: 32px;
  fill: #fff;
}

.app-grid {
  align-self: center;
  margin-left: auto;
  margin-right: 21px;
  display: grid;
  grid-template-columns: repeat(3, 6px);
  gap: 6px;
}

.app-grid i {
  width: 6px;
  height: 6px;
  border-radius: 2px;
  background: #f4eef2;
}

/* chat notification over the browser */
.notice {
  position: absolute;
  top: 31px;
  left: 469px;
  width: 500px;
  height: 70px;
  padding: 0 13px 2px;
  display: flex;
  align-items: center;
  gap: 14px;
  background: #fff;
  border-radius: 6px;
  box-shadow: 0 1px 4px rgba(0, 0, 0, 0.45);
  color: #3d3d3d;
  font-family: "Open Sans", sans-serif;
  line-height: 21px;
  letter-spacing: 0.1px;
}

.notice-avatar {
  width: 32px;
  height: 32px;
  margin-top: 2px;
  display: flex;
  align-items: center;
  justify-content: center;
  background: #ff8c00;
  color: #ffe9a8;
  font-size: 20px;
}
```
